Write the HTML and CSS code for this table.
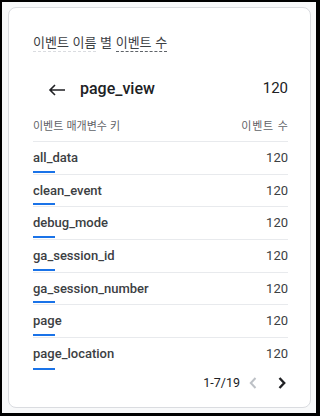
FILE: index.html
```html
<!DOCTYPE html>
<html lang="ko">
<head>
<meta charset="utf-8">
<link rel="stylesheet" href="styles.css">
</head>
<body>
<div class="frame">
  <div class="card">
    <div class="title">
      <span class="dim-u">이벤트 이름</span> 별 <span class="met-u">이벤트 수</span>
    </div>
    <div class="head">
      <svg class="back" width="18" height="12" viewBox="0 0 18 12"><path d="M17 6H2M7 1L2 6l5 5" fill="none" stroke="#202124" stroke-width="1.6"/></svg>
      <span class="head-name">page_view</span>
      <span class="head-val">120</span>
    </div>
    <div class="cols">
      <span>이벤트 매개변수 키</span>
      <span class="cols-val">이벤트 수</span>
    </div>
    <div class="rows">
      <div class="row"><div class="line"><span>all_data</span><span>120</span></div><div class="bar"></div></div>
      <div class="row"><div class="line"><span>clean_event</span><span>120</span></div><div class="bar"></div></div>
      <div class="row"><div class="line"><span>debug_mode</span><span>120</span></div><div class="bar"></div></div>
      <div class="row"><div class="line"><span>ga_session_id</span><span>120</span></div><div class="bar"></div></div>
      <div class="row"><div class="line"><span>ga_session_number</span><span>120</span></div><div class="bar"></div></div>
      <div class="row"><div class="line"><span>page</span><span>120</span></div><div class="bar"></div></div>
      <div class="row last"><div class="line"><span>page_location</span><span>120</span></div><div class="bar"></div></div>
    </div>
    <div class="pager">
      <span class="range">1-7/19</span>
      <svg class="prev" width="8" height="12" viewBox="0 0 8 12"><path d="M6.5 1L1.8 6l4.7 5" fill="none" stroke="#bdc1c6" stroke-width="2"/></svg>
      <svg class="next" width="8" height="12" viewBox="0 0 8 12"><path d="M1.5 1l4.7 5-4.7 5" fill="none" stroke="#202124" stroke-width="2.4"/></svg>
    </div>
  </div>
</div>
</body>
</html>
```

FILE: styles.css
```css
html, body {
  margin: 0;
  padding: 0;
  background: #000;
  width: 320px;
  height: 416px;
  overflow: hidden;
}
body {
  font-family: Roboto, "Noto Sans CJK KR", sans-serif;
  color: #3c4043;
}
.frame {
  margin: 2px 4px 3px 2px;
  height: 411px;
  background: #f8f9fa;
  padding: 5px 5px 5px 6px;
  box-sizing: border-box;
}
.card {
  height: 401px;
  box-sizing: border-box;
  background: #fff;
  border: 1px solid #dadce0;
  border-radius: 8px;
  padding: 26px 22px 0 24px;
  display: flex;
  flex-direction: column;
}
.title {
  font-family: "Noto Sans CJK KR", Roboto, sans-serif;
  font-size: 13px;
  line-height: 16px;
  color: #3c4043;
  height: 17px;
}
.dim-u {
  display: inline-block;
  border-bottom: 1px dashed #dadce0;
  padding-bottom: 1px;
}
.met-u {
  display: inline-block;
  border-bottom: 1px dashed #5f6368;
  padding-bottom: 1px;
}
.head {
  margin-top: 25px;
  height: 24px;
  display: flex;
  align-items: center;
}
.back {
  margin-left: 15px;
  margin-top: 3px;
}
.head-name {
  margin-left: 14px;
  font-size: 16px;
  font-weight: 500;
  color: #202124;
}
.head-val {
  margin-left: auto;
  font-size: 15px;
  color: #202124;
}
.cols {
  margin-top: 17px;
  display: flex;
  justify-content: space-between;
  font-family: "Noto Sans CJK KR", sans-serif;
  font-size: 11px;
  line-height: 16px;
  color: #5f6368;
  padding-bottom: 8px;
  border-bottom: 1px solid #e8eaed;
}
.cols-val {
  letter-spacing: 0.8px;
  margin-right: -0.8px;
}
.row {
  height: 32.67px;
  box-sizing: border-box;
  padding-top: 7px;
  border-bottom: 1px solid #e8eaed;
  display: flex;
  flex-direction: column;
}
.row.last {
  border-bottom: none;
}
.line {
  display: flex;
  justify-content: space-between;
  font-size: 13px;
  line-height: 18px;
  color: #3c4043;
}
.line span:first-child {
  font-weight: 500;
}
.bar {
  margin-top: auto;
  margin-bottom: 1px;
  width: 22px;
  height: 2px;
  background: #1a73e8;
}
.pager {
  margin-top: 4px;
  display: flex;
  justify-content: flex-end;
  align-items: center;
  height: 16px;
  font-size: 12.5px;
  color: #202124;
}
.prev {
  margin-left: 9px;
}
.next {
  margin-left: 21px;
  margin-right: 2px;
}
```
